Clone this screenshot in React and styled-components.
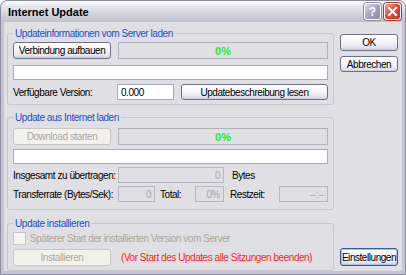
import React from 'react';
import styled, { createGlobalStyle } from 'styled-components';

const FONT = '"Liberation Sans", Arial, sans-serif';

const Global = createGlobalStyle`
  html, body {
    margin: 0;
    padding: 0;
    background: #ffffff;
  }
  body {
    font-family: ${FONT};
    font-size: 10px;
    letter-spacing: -0.45px;
  }
`;

const Window = styled.div`
  width: 406px;
  height: 275px;
  box-sizing: border-box;
  display: flex;
  flex-direction: column;
  background: #c4c4d2;
  border: 1px solid #8c8ca0;
  border-radius: 7px 7px 0 0;
  padding: 0 3px 3px 3px;
  overflow: hidden;
`;

const TitleBar = styled.div`
  height: 21px;
  margin: 0 -3px;
  padding: 0 4px 0 7px;
  display: flex;
  align-items: center;
  background: linear-gradient(#ffffff 0%, #eaeaf2 20%, #d4d4e0 60%, #c0c0d0 100%);
  border-radius: 6px 6px 0 0;
`;

const Title = styled.div`
  flex: 1;
  font-size: 11px;
  font-weight: bold;
  letter-spacing: 0;
  color: #000;
`;

const CaptionButton = styled.div`
  width: 17px;
  height: 17px;
  margin-left: 3px;
  box-sizing: border-box;
  border: 1px solid #ffffff;
  border-radius: 3px;
  display: flex;
  align-items: center;
  justify-content: center;
  color: #fff;
  font-weight: bold;
  font-size: 12px;
  letter-spacing: 0;
  background: ${(p) =>
    p.$close
      ? 'linear-gradient(135deg, #f0a090 0%, #e04a34 50%, #c83420 100%)'
      : 'linear-gradient(135deg, #d8d8e8 0%, #a0a0bc 55%, #8a8aa8 100%)'};
  box-shadow: 0 0 0 1px ${(p) => (p.$close ? '#b03c30' : '#8c8ca4')};
`;

const Body = styled.div`
  flex: 1;
  background: #e0dfe3;
  display: flex;
  gap: 6px;
  padding: 5px 4px 0 3px;
`;

const Main = styled.div`
  width: 327px;
  flex: none;
  display: flex;
  flex-direction: column;
`;

const Side = styled.div`
  width: 58px;
  flex: none;
  display: flex;
  flex-direction: column;
  padding-top: 7px;
`;

const Group = styled.fieldset`
  margin: ${(p) => p.$mt || 0}px 0 0 0;
  padding: 0 5px ${(p) => p.$pb || 4}px 5px;
  border: 1px solid #c6c6cc;
  border-radius: 3px;
  min-width: 0;
`;

const Legend = styled.legend`
  padding: 0 2px;
  margin-left: 0;
  color: #1450d8;
  line-height: 13px;
`;

const Row = styled.div`
  display: flex;
  align-items: center;
  gap: ${(p) => (p.$gap != null ? p.$gap : 7)}px;
  margin-top: ${(p) => p.$mt || 0}px;
  height: ${(p) => p.$h || 16}px;
`;

const Button = styled.button`
  width: ${(p) => (p.$w ? `${p.$w}px` : 'auto')};
  flex: ${(p) => (p.$w ? 'none' : 1)};
  height: ${(p) => p.$h || 17}px;
  box-sizing: border-box;
  padding: 0;
  font-family: ${FONT};
  font-size: 10px;
  letter-spacing: -0.45px;
  white-space: nowrap;
  color: ${(p) => (p.disabled ? '#acaaa2' : '#000')};
  border: 1px solid ${(p) => (p.disabled ? '#cac8c0' : p.$default ? '#2c5cb0' : '#6e7088')};
  border-radius: 3px;
  background: ${(p) =>
    p.disabled
      ? '#f2f1ec'
      : 'linear-gradient(#ffffff 0%, #f6f6fa 45%, #e6e6ee 80%, #cfcfdc 100%)'};
  box-shadow: ${(p) => (p.$default ? 'inset 0 0 0 1px #a8c4ec' : 'none')};
`;

const SideButton = styled(Button)`
  width: 100%;
  margin-top: ${(p) => p.$mt || 0}px;
  flex: none;
`;

const Spacer = styled.div`
  flex: 1;
`;

const Progress = styled.div`
  flex: 1;
  height: 17px;
  box-sizing: border-box;
  border: 1px solid #b2b2bc;
  background: #e0dfe3;
  display: flex;
  align-items: center;
  justify-content: center;
  color: #22ee22;
  font-weight: bold;
  font-size: 11px;
  letter-spacing: 0;
`;

const Edit = styled.div`
  width: ${(p) => (p.$w ? `${p.$w}px` : 'auto')};
  flex: ${(p) => (p.$w ? 'none' : 1)};
  height: ${(p) => p.$h || 15}px;
  box-sizing: border-box;
  border: 1px solid #a5acb5;
  background: #fff;
  display: flex;
  align-items: center;
  padding: 0 3px;
  color: #000;
`;

const ReadBox = styled.div`
  width: ${(p) => (p.$w ? `${p.$w}px` : 'auto')};
  flex: ${(p) => (p.$w ? 'none' : 1)};
  height: 16px;
  box-sizing: border-box;
  border: 1px solid #b8b8c0;
  background: #e0dfe3;
  display: flex;
  align-items: center;
  justify-content: flex-end;
  padding: 0 3px;
  color: #a8a8a8;
`;

const Label = styled.span`
  width: ${(p) => (p.$w ? `${p.$w}px` : 'auto')};
  margin-left: ${(p) => p.$ml || 0}px;
  flex: none;
  box-sizing: border-box;
  color: ${(p) => p.$color || '#000'};
  white-space: nowrap;
`;

const Check = styled.span`
  width: 13px;
  height: 13px;
  box-sizing: border-box;
  border: 1px solid #cac8bb;
  background: #f4f4f2;
  flex: none;
`;

export default function App() {
  return (
    <>
      <Global />
      <Window>
        <TitleBar>
          <Title>Internet Update</Title>
          <CaptionButton>?</CaptionButton>
          <CaptionButton $close>
            <svg width="11" height="11" viewBox="0 0 11 11">
              <path d="M2 2 L9 9 M9 2 L2 9" stroke="#fff" strokeWidth="2" strokeLinecap="square" />
            </svg>
          </CaptionButton>
        </TitleBar>
        <Body>
          <Main>
            <Group $pb={4}>
              <Legend>Updateinformationen vom Server laden</Legend>
              <Row $mt={2} $h={17}>
                <Button $w={98}>Verbindung aufbauen</Button>
                <Progress>0%</Progress>
              </Row>
              <Row $mt={6} $h={15}>
                <Edit />
              </Row>
              <Row $mt={4} $gap={7}>
                <Label $w={97}>Verfügbare Version:</Label>
                <Edit $w={57} $h={16}>0.000</Edit>
                <Button $h={16}>Updatebeschreibung lesen</Button>
              </Row>
            </Group>
            <Group $mt={6} $pb={7}>
              <Legend>Update aus Internet laden</Legend>
              <Row $mt={4} $h={17}>
                <Button $w={98} disabled>Download starten</Button>
                <Progress>0%</Progress>
              </Row>
              <Row $mt={4} $h={15}>
                <Edit />
              </Row>
              <Row $mt={3} $gap={0}>
                <Label $w={105}>Insgesamt zu übertragen:</Label>
                <ReadBox $w={106}>0</ReadBox>
                <Label $ml={8}>Bytes</Label>
              </Row>
              <Row $mt={3} $gap={0}>
                <Label $w={105}>Transferrate (Bytes/Sek):</Label>
                <ReadBox $w={37}>0</ReadBox>
                <Label $w={35} $ml={5}>Total:</Label>
                <ReadBox $w={29}>0%</ReadBox>
                <Label $w={49} $ml={6}>Restzeit:</Label>
                <ReadBox>--:--</ReadBox>
              </Row>
            </Group>
            <Group $mt={7} $pb={4}>
              <Legend>Update installieren</Legend>
              <Row $mt={2} $h={13} $gap={4}>
                <Check />
                <Label $color="#aca899">Späterer Start der installierten Version vom Server</Label>
              </Row>
              <Row $mt={4} $h={17} $gap={10}>
                <Button $w={98} disabled>Installieren</Button>
                <Label $color="#ff2424">(Vor Start des Updates alle Sitzungen beenden)</Label>
              </Row>
            </Group>
          </Main>
          <Side>
            <SideButton>OK</SideButton>
            <SideButton $mt={5} $h={16}>Abbrechen</SideButton>
            <Spacer />
            <SideButton $default $h={18} style={{ marginBottom: 5 }}>Einstellungen</SideButton>
          </Side>
        </Body>
      </Window>
    </>
  );
}
